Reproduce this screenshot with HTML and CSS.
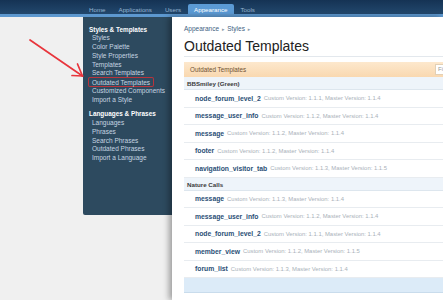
FILE: index.html
```html
<!DOCTYPE html>
<html>
<head>
<meta charset="utf-8">
<link rel="stylesheet" href="styles.css">
</head>
<body>
<header class="topbar">
  <nav class="tabs">
    <a class="tab">Home</a>
    <a class="tab">Applications</a>
    <a class="tab">Users</a>
    <a class="tab active">Appearance</a>
    <a class="tab">Tools</a>
  </nav>
</header>
<div class="page">
  <div class="gutter">
    <svg class="arrow" width="90" height="70" viewBox="0 0 90 70">
      <g stroke="#e8353c" stroke-width="1.7" stroke-linecap="round" fill="none">
        <line x1="30" y1="23" x2="82.5" y2="59"/>
        <line x1="82.5" y1="59" x2="77.5" y2="47"/>
        <line x1="82.5" y1="59" x2="72" y2="58.5"/>
      </g>
    </svg>
  </div>
  <aside class="sidebar">
    <h3 class="side-head">Styles &amp; Templates</h3>
    <ul class="side-list">
      <li>Styles</li>
      <li>Color Palette</li>
      <li>Style Properties</li>
      <li>Templates</li>
      <li>Search Templates</li>
      <li><span class="marked">Outdated Templates</span></li>
      <li>Customized Components</li>
      <li>Import a Style</li>
    </ul>
    <h3 class="side-head">Languages &amp; Phrases</h3>
    <ul class="side-list">
      <li>Languages</li>
      <li>Phrases</li>
      <li>Search Phrases</li>
      <li>Outdated Phrases</li>
      <li>Import a Language</li>
    </ul>
  </aside>
  <main class="main">
    <div class="crumbs">Appearance <span class="sep">▸</span> Styles <span class="sep">▸</span></div>
    <h1 class="title">Outdated Templates</h1>
    <div class="list">
      <div class="list-head"><span>Outdated Templates</span><span class="filter">Fi</span></div>
      <div class="group">BBSmiley (Green)</div>
      <div class="row"><span class="name">node_forum_level_2</span><span class="ver">Custom Version: 1.1.1, Master Version: 1.1.4</span></div>
      <div class="row"><span class="name">message_user_info</span><span class="ver">Custom Version: 1.1.2, Master Version: 1.1.4</span></div>
      <div class="row"><span class="name">message</span><span class="ver">Custom Version: 1.1.2, Master Version: 1.1.4</span></div>
      <div class="row"><span class="name">footer</span><span class="ver">Custom Version: 1.1.2, Master Version: 1.1.4</span></div>
      <div class="row"><span class="name">navigation_visitor_tab</span><span class="ver">Custom Version: 1.1.3, Master Version: 1.1.5</span></div>
      <div class="group">Nature Calls</div>
      <div class="row"><span class="name">message</span><span class="ver">Custom Version: 1.1.3, Master Version: 1.1.4</span></div>
      <div class="row"><span class="name">message_user_info</span><span class="ver">Custom Version: 1.1.2, Master Version: 1.1.4</span></div>
      <div class="row"><span class="name">node_forum_level_2</span><span class="ver">Custom Version: 1.1.1, Master Version: 1.1.4</span></div>
      <div class="row"><span class="name">member_view</span><span class="ver">Custom Version: 1.1.2, Master Version: 1.1.5</span></div>
      <div class="row"><span class="name">forum_list</span><span class="ver">Custom Version: 1.1.3, Master Version: 1.1.4</span></div>
      <div class="foot"></div>
    </div>
  </main>
</div>
</body>
</html>
```

FILE: styles.css
```css
html, body {
  margin: 0;
  width: 443px;
  height: 300px;
  overflow: hidden;
}
body {
  background: #f0f0f0;
  font-family: "Liberation Sans", Arial, sans-serif;
}
.topbar {
  height: 14px;
  background: linear-gradient(#153354, #22486d);
  border-bottom: 3px solid #5d98cf;
}
.tabs {
  display: flex;
  align-items: flex-end;
  height: 14px;
  padding-left: 82.5px;
}
.tab {
  padding: 0 6.5px;
  height: 10px;
  line-height: 11px;
  font-size: 6.2px;
  color: #98b5d1;
}
.tab.active {
  background: #5b9ad5;
  color: #fff;
  border-radius: 2px 2px 0 0;
}
.page {
  display: flex;
  height: 283px;
}
.gutter {
  width: 83px;
  flex: none;
  position: relative;
}
.arrow {
  position: absolute;
  left: 0;
  top: 0;
}
.sidebar {
  width: 89px;
  flex: none;
  height: 198px;
  box-sizing: border-box;
  background: #2d4a5f;
  padding: 8.5px 0 0 6px;
  border-radius: 0 0 0 2px;
}
.side-head {
  margin: 0;
  font-size: 6.4px;
  font-weight: bold;
  line-height: 8.8px;
  color: #fff;
}
.side-list {
  list-style: none;
  margin: 0 0 6px;
  padding: 0 0 0 3px;
  font-size: 6.5px;
  line-height: 8.75px;
  color: #c6d5e2;
}
.marked {
  padding: 0.5px 3px;
  margin: 0 -3px;
  box-shadow: 0 0 0 1px #b8343c;
  border-radius: 1px;
}
.main {
  flex: 1;
  min-width: 0;
  background: #fff;
  box-shadow: -3px 0 6px rgba(0, 0, 0, 0.35);
  padding: 7px 0 0 12px;
  overflow: hidden;
}
.crumbs {
  font-size: 6.5px;
  line-height: 9px;
  color: #41617f;
  white-space: nowrap;
}
.sep {
  font-family: "DejaVu Sans", sans-serif;
  font-size: 5px;
  color: #8a9aaa;
  margin: 0 1px;
}
.title {
  margin: 2px 0 0;
  width: 290px;
  font-size: 14px;
  font-weight: normal;
  line-height: 20px;
  color: #222;
  border-bottom: 1px solid #e3e8ed;
}
.list {
  margin-top: 5px;
  width: 290px;
}
.list-head {
  display: flex;
  align-items: center;
  height: 15px;
  padding-left: 6px;
  background: linear-gradient(#fde8cd, #f9d8b0);
  font-size: 6.3px;
  color: #6e5234;
}
.filter {
  margin-left: auto;
  margin-right: 9px;
  width: 30px;
  height: 11px;
  box-sizing: border-box;
  background: #fff;
  border: 1px solid #e2d0b6;
  padding-left: 2px;
  font-size: 6px;
  line-height: 9px;
  color: #999;
}
.group {
  height: 13px;
  box-sizing: border-box;
  line-height: 13px;
  padding-left: 3px;
  background: #eef4fa;
  border-bottom: 1px solid #dde6ee;
  font-size: 6.2px;
  font-weight: bold;
  color: #3a3a3a;
}
.row {
  display: flex;
  align-items: center;
  gap: 3px;
  height: 17.5px;
  box-sizing: border-box;
  padding-left: 11px;
  border-bottom: 1px solid #e8ecf0;
  white-space: nowrap;
}
.name {
  font-size: 6.8px;
  font-weight: bold;
  color: #2b4f76;
}
.ver {
  font-size: 5.9px;
  color: #a9b1b9;
}
.foot {
  height: 14px;
  background: #dcebf8;
  border-bottom: 1px solid #c9dcec;
}
```
